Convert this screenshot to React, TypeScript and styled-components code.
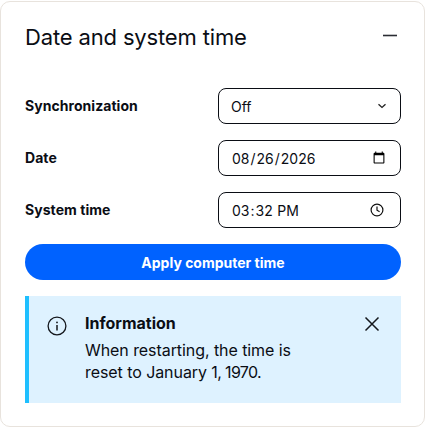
import React from 'react'
import styled, { createGlobalStyle } from 'styled-components'

const chevron =
	"url(\"data:image/svg+xml,%3Csvg xmlns='http://www.w3.org/2000/svg' width='10' height='6' viewBox='0 0 10 6'%3E%3Cpath d='M1.5 1.2L5 4.4l3.5-3.2' fill='none' stroke='%23222' stroke-width='1.3'/%3E%3C/svg%3E\")"

const clock =
	"url(\"data:image/svg+xml,%3Csvg xmlns='http://www.w3.org/2000/svg' width='14' height='14' viewBox='0 0 14 14'%3E%3Ccircle cx='7' cy='7' r='5.9' fill='none' stroke='%23111' stroke-width='1.2'/%3E%3Cpath d='M7 3.4V7.2l2.6 1.5' fill='none' stroke='%23111' stroke-width='1.2'/%3E%3C/svg%3E\")"

const GlobalStyle = createGlobalStyle`
	html, body {
		margin: 0;
		padding: 0;
		background: #fff;
	}
	body {
		font-family: Inter, "Liberation Sans", sans-serif;
		color: #0a0d14;
	}
	* {
		box-sizing: border-box;
	}
`

const App = () => {
	return (
		<>
			<GlobalStyle />
			<Card>
				<Header>
					<Title>Date and system time</Title>
					<IconButton aria-label="Collapse">
						<svg width="16" height="16" viewBox="0 0 16 16">
							<path d="M1 6.5h14" stroke="#2a2d33" strokeWidth="1.6" />
						</svg>
					</IconButton>
				</Header>

				<Form>
					<Label>Synchronization</Label>
					<Select defaultValue="off">
						<option value="off">Off</option>
						<option value="ntp">NTP</option>
					</Select>

					<Label>Date</Label>
					<Field type="date" defaultValue="2026-08-26" />

					<Label>System time</Label>
					<TimeField type="time" defaultValue="15:32" />
				</Form>

				<Primary>Apply computer time</Primary>

				<Notice>
					<NoticeIcon width="20" height="20" viewBox="0 0 20 20" fill="none">
						<circle cx="10" cy="10" r="8.9" stroke="#14171c" strokeWidth="1.3" />
						<path d="M10 9v5.4" stroke="#14171c" strokeWidth="1.5" />
						<circle cx="10" cy="6.4" r="0.9" fill="#14171c" />
					</NoticeIcon>
					<NoticeBody>
						<NoticeTitle>Information</NoticeTitle>
						<NoticeText>
							When restarting, the time is
							<br />
							reset to January <Digits>1, 1970.</Digits>
						</NoticeText>
					</NoticeBody>
					<CloseButton aria-label="Close">
						<svg width="16" height="16" viewBox="0 0 16 16">
							<path d="M1.5 1.5l13 13M14.5 1.5l-13 13" stroke="#14171c" strokeWidth="1.5" />
						</svg>
					</CloseButton>
				</Notice>
			</Card>
		</>
	)
}

export default App

const Card = styled.main`
	width: 425px;
	height: 426px;
	margin-top: 1px;
	padding: 19px 23px 23px 24px;
	background: #fff;
	border: 1px solid #e8e3dd;
	border-radius: 10px;
`

const Header = styled.header`
	display: flex;
	justify-content: space-between;
	align-items: center;
	height: 32px;
	padding-right: 3px;
`

const Title = styled.h2`
	margin: 0;
	font-size: 22px;
	font-weight: 400;
	line-height: 32px;
	letter-spacing: -0.15px;
`

const IconButton = styled.button`
	display: flex;
	padding: 0;
	border: 0;
	background: none;
`

const CloseButton = styled(IconButton)`
	margin-top: 3px;
`

const Form = styled.div`
	display: grid;
	grid-template-columns: 193px 183px;
	grid-auto-rows: 36px;
	row-gap: 16px;
	align-items: center;
	margin-top: 35px;
`

const Label = styled.label`
	padding-bottom: 2px;
	font-size: 14px;
	font-weight: 700;
	letter-spacing: 0.05px;
`

const Select = styled.select`
	width: 100%;
	height: 36px;
	padding: 0 12px;
	font-family: Inter, "Liberation Sans", sans-serif;
	font-size: 14px;
	color: #0a0d14;
	appearance: none;
	background: #fff ${chevron} no-repeat right 13px center;
	border: 1px solid #0a0d14;
	border-radius: 8px;
`

const Field = styled.input`
	width: 100%;
	height: 36px;
	padding: 0 12px;
	font-family: Inter, "Liberation Sans", sans-serif;
	font-size: 14px;
	color: #0a0d14;
	background: #fff;
	border: 1px solid #0a0d14;
	border-radius: 8px;
`

const TimeField = styled(Field)`
	&::-webkit-calendar-picker-indicator {
		width: 14px;
		height: 14px;
		padding: 0;
		margin-right: 4px;
		background: ${clock} no-repeat center;
	}
`

const Primary = styled.button`
	display: block;
	width: 376px;
	height: 36px;
	margin-top: 16px;
	font-family: Inter, "Liberation Sans", sans-serif;
	font-size: 14px;
	font-weight: 700;
	color: #fff;
	background: #0062ff;
	border: 0;
	border-radius: 18px;
`

const Notice = styled.section`
	display: flex;
	align-items: flex-start;
	width: 376px;
	height: 107px;
	margin-top: 16px;
	padding: 17px 21px 0 18px;
	background: #def2ff;
	border-left: 4px solid #1ebfff;
`

const NoticeIcon = styled.svg`
	flex: none;
	margin-top: 3px;
`

const NoticeBody = styled.div`
	flex: 1;
	margin-left: 18px;
`

const NoticeTitle = styled.div`
	font-size: 16px;
	font-weight: 700;
	line-height: 20px;
`

const NoticeText = styled.p`
	margin: 6px 0 0;
	font-size: 16px;
	line-height: 22px;
	letter-spacing: -0.07px;
`

const Digits = styled.span`
	letter-spacing: -0.65px;
`
